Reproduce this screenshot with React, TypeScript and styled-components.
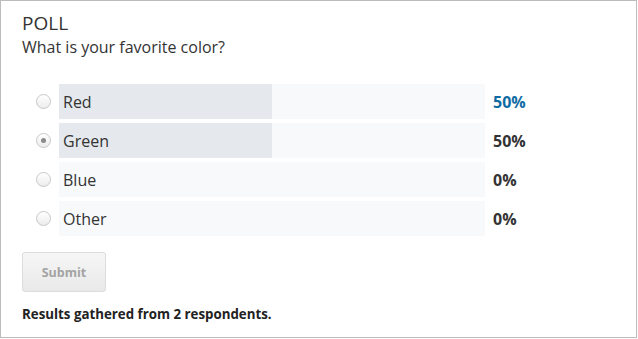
import React, { useState } from 'react';
import styled, { createGlobalStyle } from 'styled-components';

const GlobalStyle = createGlobalStyle`
body {
  margin: 0;
  background: white;
  font-family: "Open Sans", "Liberation Sans", sans-serif;
  color: #333;
}
`
const Card = styled.div`
box-sizing: border-box;
width: 637px;
height: 338px;
border: 1px solid #bcbcbc;
padding: 11px 21px 0;
`
const Title = styled.h2`
margin: 0;
font-size: 19px;
line-height: 22px;
font-weight: 400;
color: #333;
`
const Question = styled.p`
margin: 3px 0 0;
font-size: 16px;
line-height: 20px;
color: #333;
`
const Options = styled.div`
display: flex;
flex-direction: column;
gap: 4px;
margin-top: 27px;
`
const Row = styled.label`
display: grid;
grid-template-columns: 37px 426px auto;
align-items: center;
height: 35px;
cursor: pointer;
`
const Radio = styled.span<{ checked: boolean }>`
box-sizing: border-box;
width: 15px;
height: 15px;
margin-left: 14px;
border-radius: 50%;
border: 1px solid #c8c8c8;
background: linear-gradient(#ffffff, #ececec);
display: flex;
align-items: center;
justify-content: center;
&::after {
  content: '';
  width: 5px;
  height: 5px;
  border-radius: 50%;
  background: #8a8a8a;
  display: ${p => p.checked ? 'block' : 'none'};
}
`
const Track = styled.div`
position: relative;
height: 35px;
background: #f8f9fb;
display: flex;
align-items: center;
`
const Fill = styled.div`
position: absolute;
left: 0;
top: 0;
bottom: 0;
background: #e5e9ed;
`
const Label = styled.span`
position: relative;
padding-left: 4px;
font-size: 16px;
color: #333;
`
const Percent = styled.span<{ highlight: boolean }>`
padding-left: 8px;
font-size: 16px;
font-weight: 700;
color: ${p => p.highlight ? '#0f6ca3' : '#333'};
`
const Button = styled.button`
margin-top: 16px;
width: 84px;
height: 40px;
border: 1px solid #dcdcdc;
border-radius: 3px;
background: linear-gradient(#f6f6f6, #e9e9e9);
color: #a3a3a3;
font-family: inherit;
font-size: 12.5px;
font-weight: 700;
`
const Footer = styled.p`
margin: 13px 0 0;
font-size: 13.3px;
line-height: 18px;
font-weight: 700;
color: #222;
`

const options = [
  { name: 'Red', percent: 50 },
  { name: 'Green', percent: 50 },
  { name: 'Blue', percent: 0 },
  { name: 'Other', percent: 0 },
]

function App() {
  const [selected, setSelected] = useState('Green')
  return (
    <Card>
      <GlobalStyle />
      <Title>POLL</Title>
      <Question>What is your favorite color?</Question>
      <Options>
        {options.map((o, index) => <Row key={o.name} onClick={() => setSelected(o.name)}>
          <Radio checked={selected === o.name} />
          <Track>
            <Fill style={{ width: `${o.percent}%` }} />
            <Label>{o.name}</Label>
          </Track>
          <Percent highlight={index === 0}>{o.percent}%</Percent>
        </Row>)}
      </Options>
      <Button disabled>Submit</Button>
      <Footer>Results gathered from 2 respondents.</Footer>
    </Card>
  );
}

export default App;
